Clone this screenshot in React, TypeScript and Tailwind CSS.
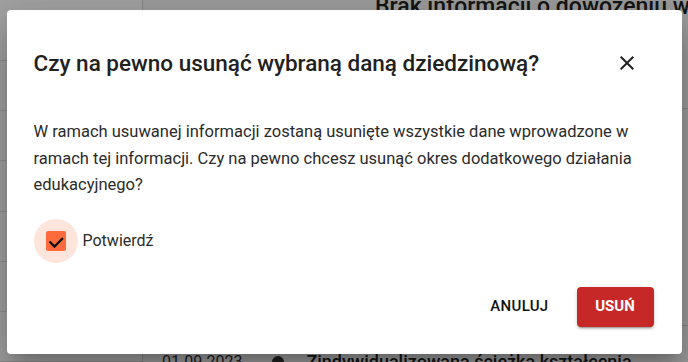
import React from "react";

const sideRows = Array.from({ length: 7 });

const CloseIcon = () => (
  <svg viewBox="0 0 24 24" className="h-6 w-6 fill-[#212121]">
    <path d="M19 6.41 17.59 5 12 10.59 6.41 5 5 6.41 10.59 12 5 17.59 6.41 19 12 13.41 17.59 19 19 17.59 13.41 12z" />
  </svg>
);

const CheckedBox = () => (
  <svg viewBox="0 0 20 20" className="h-5 w-5">
    <rect x="0" y="0" width="20" height="20" rx="2" fill="#ff6a3d" />
    <path
      d="M3.5 10.5 8.5 15.5 17 7"
      fill="none"
      stroke="#111"
      strokeWidth="2.4"
    />
  </svg>
);

const App = () => {
  return (
    <div className="relative h-[362px] w-[688px] overflow-hidden bg-white font-['Roboto',sans-serif]">
      {/* page behind the dialog */}
      <div className="flex h-full">
        <aside className="flex w-[143px] shrink-0 flex-col border-r border-[#d0d0d0] bg-[#fafafa]">
          <div className="h-[12px]" />
          {sideRows.map((_, i) => (
            <div key={i} className="h-[55px] border-b border-[#dcdcdc]" />
          ))}
        </aside>
        <main className="flex min-w-0 flex-1 flex-col overflow-hidden bg-[#f2f2f2]">
          <h1 className="-mt-[7px] whitespace-nowrap pl-[232px] text-[23px] font-medium leading-[28px] text-[#222]">
            Brak informacji o dowożeniu w Wybranym okresie
          </h1>
          <p className="whitespace-nowrap pl-[396px] pt-[1px] text-[15px] leading-[20px] text-[#444]">
            eksport danych
          </p>
          <div className="mt-[66px] border-t border-[#cfcfcf]" />
          <p className="whitespace-nowrap pl-[330px] pt-[72px] text-[16px] leading-[24px] text-[#333]">
            Opieka w czasie przewozu k
          </p>
          <div className="mt-[120px] border-t border-[#cfcfcf]" />
          <div className="flex items-center whitespace-nowrap pl-[19px] pt-[24px] leading-[24px]">
            <span className="text-[16px] text-[#333]">01.09.2023</span>
            <span className="ml-[30px] h-[12px] w-[12px] rounded-full bg-[#333]" />
            <span className="ml-[22px] text-[18px] font-medium text-[#222]">
              Zindywidualizowana ścieżka kształcenia
            </span>
          </div>
        </main>
      </div>

      {/* backdrop + dialog */}
      <div className="absolute inset-0 flex justify-center bg-black/35 pt-[10px]">
        <div className="flex h-[344px] w-[675px] flex-col rounded-[4px] bg-white pl-[27px] pr-[28px] shadow-[0_11px_15px_-7px_rgba(0,0,0,0.2),0_24px_38px_3px_rgba(0,0,0,0.14),0_9px_46px_8px_rgba(0,0,0,0.12)]">
          <div className="flex items-center justify-between pt-[37px]">
            <h2 className="text-[22.5px] font-medium leading-[32px] text-[#212121]">
              Czy na pewno usunąć wybraną daną dziedzinową?
            </h2>
            <button className="mr-[15px] flex h-6 w-6 items-center justify-center">
              <CloseIcon />
            </button>
          </div>

          <p className="mt-[40px] text-[16.5px] leading-[26.5px] text-[#2b2b2b]">
            W ramach usuwanej informacji zostaną usunięte wszystkie dane wprowadzone w
            ramach tej informacji. Czy na pewno chcesz usunąć okres dodatkowego działania
            edukacyjnego?
          </p>

          <label className="mt-[20px] flex items-center">
            <span className="flex h-[44px] w-[44px] items-center justify-center rounded-full bg-[#fde5dc]">
              <CheckedBox />
            </span>
            <span className="ml-[5px] text-[16px] text-[#2b2b2b]">Potwierdź</span>
          </label>

          <div className="mt-[24px] flex items-center justify-end gap-[20px]">
            <button className="px-2 py-[6px] text-[15px] font-medium uppercase tracking-[0.3px] text-[#111]">
              Anuluj
            </button>
            <button className="flex h-[40px] w-[77px] items-center justify-center rounded-[4px] bg-[#c62828] text-[15px] font-bold uppercase text-white shadow-[0_3px_1px_-2px_rgba(0,0,0,0.2),0_2px_2px_0_rgba(0,0,0,0.14),0_1px_5px_0_rgba(0,0,0,0.12)]">
              Usuń
            </button>
          </div>
        </div>
      </div>
    </div>
  );
};

export default App;
